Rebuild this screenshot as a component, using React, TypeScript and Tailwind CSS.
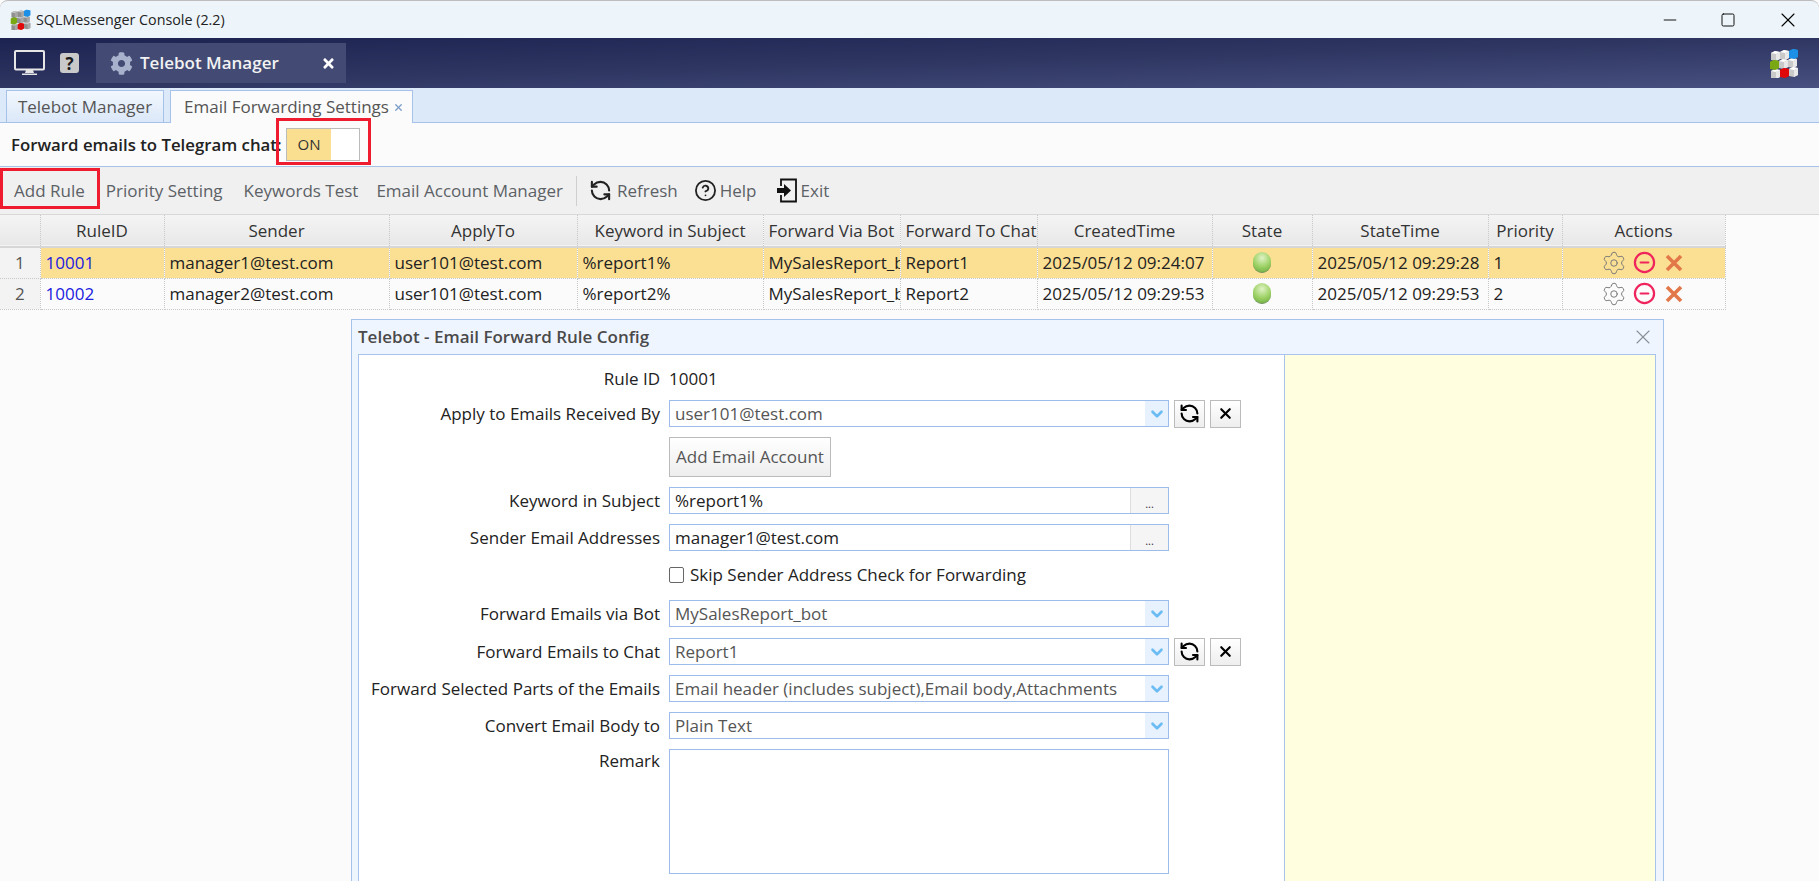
import { CircleHelp, CircleMinus, Minus, RefreshCcw, Settings, Square, X, ChevronDown } from 'lucide-react'
import { FaCog, FaTimes } from 'react-icons/fa'

const rows = [
  { no: 1, id: '10001', sender: 'manager1@test.com', kw: '%report1%', chat: 'Report1', created: '2025/05/12 09:24:07', state: '2025/05/12 09:29:28', pri: '1' },
  { no: 2, id: '10002', sender: 'manager2@test.com', kw: '%report2%', chat: 'Report2', created: '2025/05/12 09:29:53', state: '2025/05/12 09:29:53', pri: '2' },
]

function CubeLogo({ className, dim }: { className?: string; dim?: boolean }) {
  const cells = [
    [2, 3, '#fff'], [11, 2, '#fff'], [10, 11, '#fff'], [19, 10, '#fff'], [2, 21, '#fff'], [20, 19, '#fff'],
    [20, 1, '#1c8fe6'], [1, 12, '#79a814'], [11, 20, '#e00808'],
  ] as const
  const top = dim ? '#c4c4c4' : '#ffffff'
  const side = dim ? '#a8a8a8' : '#e8e8e8'
  const front = dim ? '#8f8f8f' : '#c9c9c9'
  return (
    <svg viewBox="0 0 30 30" className={className}>
      {cells.map(([x, y, c], i) => (
        <g key={i}>
          <path d={`M${x} ${y + 2} l4 -2 l5 1 v7 l-4 2 l-5 -1 z`} fill={c === '#fff' ? front : c} />
          <path d={`M${x} ${y + 2} l4 -2 l5 1 l-4 2 z`} fill={c === '#fff' ? top : c} />
          <path d={`M${x + 5} ${y + 3} l4 -2 v7 l-4 2 z`} fill={c === '#fff' ? side : c} opacity={c === '#fff' ? 1 : 0.75} />
        </g>
      ))}
    </svg>
  )
}

function ExitIcon() {
  return (
    <svg viewBox="0 0 20 25" className="w-[20px] h-[25px] text-[#111]">
      <path d="M4 8V1.5h15v22H4V17" fill="none" stroke="currentColor" strokeWidth="1.8" />
      <path d="M0 10h7V6l7 6.5L7 19v-4H0z" fill="currentColor" />
    </svg>
  )
}

function Chevron() {
  return (
    <div className="w-[23px] h-full bg-[#e8f1fe] flex items-center justify-center shrink-0">
      <ChevronDown className="w-[18px] h-[18px] text-[#6cbcf4]" strokeWidth={3.5} />
    </div>
  )
}

function Combo({ value }: { value: string }) {
  return (
    <div className="w-[500px] h-full border border-[#9cbdeb] bg-white flex items-center justify-between">
      <span className="pl-[5px] text-[#555]">{value}</span>
      <Chevron />
    </div>
  )
}

function TextField({ value }: { value: string }) {
  return (
    <div className="w-[500px] h-full border border-[#9cbdeb] bg-white flex items-center justify-between">
      <span className="pl-[5px] text-[#222]">{value}</span>
      <div className="w-[38px] h-full border-l border-[#ddd] bg-[#f5f5f5] flex items-end justify-center text-[11px] text-[#333] leading-[18px]">...</div>
    </div>
  )
}

function SquareBtn({ children }: { children: React.ReactNode }) {
  return (
    <div className="w-[31px] h-[28px] border border-[#bbb] bg-gradient-to-b from-white to-[#eee] flex items-center justify-center">
      {children}
    </div>
  )
}

function ComboButtons() {
  return (
    <div className="flex gap-[5px] ml-[5px]">
      <SquareBtn><RefreshCcw className="w-[21px] h-[21px] text-black" strokeWidth={2.4} /></SquareBtn>
      <SquareBtn><X className="w-[17px] h-[17px] text-black" strokeWidth={3} /></SquareBtn>
    </div>
  )
}

function FormRow({ label, className, children }: { label?: string; className: string; children: React.ReactNode }) {
  return (
    <div className={`flex items-center ${className}`}>
      <div className="w-[301px] text-right text-[#222] shrink-0 whitespace-nowrap">{label}</div>
      <div className="ml-[9px] h-full flex items-center">{children}</div>
    </div>
  )
}

function Dot() {
  return <div className="mx-auto w-[18px] h-[21px] rounded-full border-b border-[#6d8f58] bg-[radial-gradient(circle_at_50%_30%,#dff3c4,#9bd063_55%,#67a83f)]" />
}

function CrossIcon() {
  return (
    <svg viewBox="0 0 20 20" className="w-[20px] h-[20px]">
      <path d="M3 3l14 14M17 3L3 17" stroke="#e2784a" strokeWidth="3.6" />
    </svg>
  )
}

const thCls = 'border-r border-dotted border-[#c8c8c8] font-normal text-[#333]'
const tdCls = 'border-r border-b border-dotted border-[#c8c8c8] px-[5px] overflow-hidden whitespace-nowrap'

export default function App() {
  return (
    <div className="relative w-[1819px] h-[881px] overflow-hidden bg-[#fbfbfb] font-['Open_Sans',sans-serif] text-[17px] flex flex-col">
      {/* Title bar */}
      <div className="h-[38px] shrink-0 bg-[#eef5fa] border-t border-[#bdbdbd] rounded-t-[8px] flex items-center justify-between pl-[10px]">
        <div className="flex items-center gap-[5px]">
          <CubeLogo dim className="w-[21px] h-[21px]" />
          <span className="text-[14.3px] text-[#222]">SQLMessenger Console (2.2)</span>
        </div>
        <div className="flex items-center gap-[40px] pr-[19px]">
          <Minus className="w-[20px] h-[20px] text-black" strokeWidth={1.1} />
          <Square className="w-[16px] h-[16px] text-black" strokeWidth={1.4} />
          <X className="w-[24px] h-[24px] text-black" strokeWidth={1.1} />
        </div>
      </div>

      {/* Dark app header */}
      <div className="h-[50px] shrink-0 bg-gradient-to-br from-[#1d2350] via-[#2f3662] to-[#475080] flex items-center justify-between pl-[14px] pr-[20px]">
        <div className="flex items-center">
          <svg viewBox="0 0 31 26" className="w-[31px] h-[26px]">
            <rect x="1" y="1" width="29" height="18.5" rx="1" fill="#1e2450" stroke="#e6e6e6" strokeWidth="2" />
            <path d="M12 20h7l1 3H11zM8 23.5h15V25H8z" fill="#e6e6e6" />
          </svg>
          <div className="ml-[15px] w-[19px] h-[20px] rounded-[3px] bg-[#c9c9c9] flex items-center justify-center text-[17px] font-bold text-[#1b1b1b] leading-none">?</div>
          <div className="ml-[17px] w-[250px] h-[40px] bg-[#434b74] flex items-center pl-[14px]">
            <FaCog className="w-[23px] h-[23px] text-[#a9b2cc]" />
            <span className="ml-[7px] text-[17px] font-semibold text-[#f2f2f2]">Telebot Manager</span>
            <FaTimes className="ml-[42px] w-[15px] h-[15px] text-white" />
          </div>
        </div>
        <CubeLogo className="w-[30px] h-[30px]" />
      </div>

      {/* Tab strip */}
      <div className="h-[35px] shrink-0 bg-[#dce9f9] border-b border-[#a6c2e8] flex items-end pl-[6px] gap-[6px]">
        <div className="w-[158px] h-[32px] border border-b-0 border-[#a6c2e8] bg-gradient-to-b from-[#f2f7fd] to-[#dbe8f9] flex items-center justify-center text-[#555]">Telebot Manager</div>
        <div className="w-[243px] h-[33px] -mb-px border border-b-0 border-[#a6c2e8] bg-[#fbfbfb] flex items-center pl-[13px] text-[#555]">
          Email Forwarding Settings
          <X className="ml-[4px] w-[11px] h-[11px] text-[#7f9fc9]" strokeWidth={3} />
        </div>
      </div>

      {/* Forward toggle */}
      <div className="h-[44px] shrink-0 border-b border-[#a6c2e8] flex items-center pl-[11px]">
        <span className="w-[275px] text-[16.8px] font-semibold text-[#222] whitespace-nowrap">Forward emails to Telegram chat:</span>
        <div className="w-[74px] h-[33px] border border-[#bbb] bg-white flex">
          <div className="w-[44px] bg-[#fadf90] flex items-center justify-center text-[15px] text-[#333]">ON</div>
        </div>
      </div>

      {/* Toolbar */}
      <div className="h-[48px] shrink-0 bg-[#f0f0f0] border-b border-[#d8d8d8] flex items-center text-[#5c6166]">
        <span className="ml-[14px]">Add Rule</span>
        <span className="ml-[21px]">Priority Setting</span>
        <span className="ml-[21px]">Keywords Test</span>
        <span className="ml-[18px]">Email Account Manager</span>
        <div className="ml-[13px] w-px h-[30px] bg-[#cfcfcf]" />
        <RefreshCcw className="ml-[12px] w-[23px] h-[23px] text-[#222]" strokeWidth={2.2} />
        <span className="ml-[5px]">Refresh</span>
        <CircleHelp className="ml-[16px] w-[23px] h-[23px] text-[#222]" strokeWidth={1.9} />
        <span className="ml-[3px]">Help</span>
        <div className="ml-[20px]"><ExitIcon /></div>
        <span className="ml-[4px]">Exit</span>
      </div>

      {/* Rules table */}
      <table className="table-fixed w-[1725px] border-collapse shrink-0">
        <colgroup>
          <col className="w-[40px]" />
          <col className="w-[124px]" />
          <col className="w-[225px]" />
          <col className="w-[188px]" />
          <col className="w-[186px]" />
          <col className="w-[137px]" />
          <col className="w-[137px]" />
          <col className="w-[175px]" />
          <col className="w-[100px]" />
          <col className="w-[176px]" />
          <col className="w-[74px]" />
          <col className="w-[163px]" />
        </colgroup>
        <thead>
          <tr className="h-[32px] bg-gradient-to-b from-[#f4f4f4] to-[#e8e8e8] border-b-2 border-[#d6d6d6]">
            <th className={thCls} />
            <th className={thCls}>RuleID</th>
            <th className={thCls}>Sender</th>
            <th className={thCls}>ApplyTo</th>
            <th className={thCls}>Keyword in Subject</th>
            <th className={`${thCls} text-left pl-[5px] whitespace-nowrap overflow-hidden`}>Forward Via Bot</th>
            <th className={`${thCls} text-left pl-[5px] whitespace-nowrap overflow-hidden`}>Forward To Chat</th>
            <th className={thCls}>CreatedTime</th>
            <th className={thCls}>State</th>
            <th className={thCls}>StateTime</th>
            <th className={thCls}>Priority</th>
            <th className={thCls}>Actions</th>
          </tr>
        </thead>
        <tbody>
          {rows.map((r) => (
            <tr key={r.no} className={r.no === 1 ? 'h-[31px] bg-[#fbdf92] text-[#222]' : 'h-[31px] bg-[#fbfbfb] text-[#222]'}>
              <td className="border-r border-b border-dotted border-[#c8c8c8] bg-[#f3f3f3] text-center text-[#555]">{r.no}</td>
              <td className={`${tdCls} text-[#2020e0]`}>{r.id}</td>
              <td className={tdCls}>{r.sender}</td>
              <td className={tdCls}>user101@test.com</td>
              <td className={tdCls}>{r.kw}</td>
              <td className={tdCls}>MySalesReport_bot</td>
              <td className={tdCls}>{r.chat}</td>
              <td className={tdCls}>{r.created}</td>
              <td className={tdCls}><Dot /></td>
              <td className={tdCls}>{r.state}</td>
              <td className={tdCls}>{r.pri}</td>
              <td className={tdCls}>
                <div className="flex items-center justify-center pr-[3px]">
                  <Settings className="w-[26px] h-[26px] text-[#777]" strokeWidth={0.9} />
                  <CircleMinus className="ml-[6px] w-[23px] h-[23px] text-[#f0245c]" strokeWidth={2.3} />
                  <div className="ml-[8px]"><CrossIcon /></div>
                </div>
              </td>
            </tr>
          ))}
        </tbody>
      </table>

      {/* Red annotation boxes */}
      <div className="absolute left-[276px] top-[118px] w-[95px] h-[47px] border-[3px] border-[#ee1c2e]" />
      <div className="absolute left-0 top-[168px] w-[100px] h-[41px] border-[3px] border-[#ee1c2e]" />

      {/* Rule config dialog */}
      <div className="absolute left-[351px] top-[319px] w-[1313px] h-[580px] border border-[#a5c2ea] bg-[#eff5ff] flex flex-col pl-[6px] pr-[7px]">
        <div className="h-[34px] shrink-0 flex items-center justify-between">
          <span className="text-[17px] font-semibold text-[#4a4a4a]">Telebot - Email Forward Rule Config</span>
          <X className="mr-[1px] w-[24px] h-[24px] text-[#8a8f96]" strokeWidth={1.1} />
        </div>
        <div className="flex-1 border border-[#a9c4ec] bg-white flex">
          <div className="w-[926px] border-r border-[#a9c4ec] flex flex-col pt-[11px]">
            <FormRow label="Rule ID" className="h-[26px]"><span className="text-[#222]">10001</span></FormRow>
            <FormRow label="Apply to Emails Received By" className="h-[27px] mt-[8px]">
              <Combo value="user101@test.com" />
              <ComboButtons />
            </FormRow>
            <FormRow className="h-[40px] mt-[10px]">
              <div className="w-[162px] h-full border border-[#bbb] bg-gradient-to-b from-white to-[#eee] flex items-center justify-center text-[#555]">Add Email Account</div>
            </FormRow>
            <FormRow label="Keyword in Subject" className="h-[27px] mt-[10px]"><TextField value="%report1%" /></FormRow>
            <FormRow label="Sender Email Addresses" className="h-[27px] mt-[10px]"><TextField value="manager1@test.com" /></FormRow>
            <FormRow className="h-[20px] mt-[14px]">
              <div className="w-[15px] h-[16px] border border-[#666] rounded-[2px] bg-white" />
              <span className="ml-[6px] text-[#222]">Skip Sender Address Check for Forwarding</span>
            </FormRow>
            <FormRow label="Forward Emails via Bot" className="h-[27px] mt-[15px]"><Combo value="MySalesReport_bot" /></FormRow>
            <FormRow label="Forward Emails to Chat" className="h-[27px] mt-[11px]">
              <Combo value="Report1" />
              <ComboButtons />
            </FormRow>
            <FormRow label="Forward Selected Parts of the Emails" className="h-[27px] mt-[10px]"><Combo value="Email header (includes subject),Email body,Attachments" /></FormRow>
            <FormRow label="Convert Email Body to" className="h-[27px] mt-[10px]"><Combo value="Plain Text" /></FormRow>
            <div className="flex mt-[10px]">
              <div className="w-[301px] text-right text-[#222] -mt-[1px]">Remark</div>
              <div className="ml-[9px] w-[500px] h-[125px] border border-[#9cbdeb] bg-white" />
            </div>
          </div>
          <div className="flex-1 bg-[#ffffdf]" />
        </div>
      </div>
    </div>
  )
}
